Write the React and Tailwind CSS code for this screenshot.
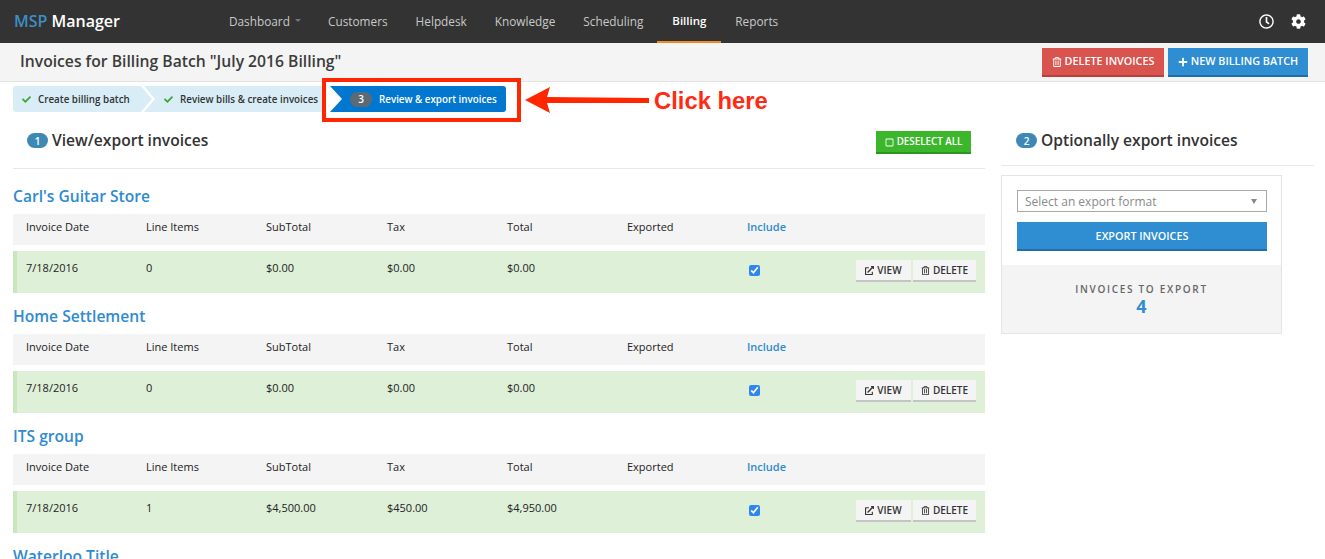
import React from 'react';
import { FaCheck, FaCog, FaExternalLinkAlt, FaPlus, FaRegClock, FaRegSquare, FaRegTrashAlt } from 'react-icons/fa';

const navItems = ['Customers', 'Helpdesk', 'Knowledge', 'Scheduling'];

const customers = [
  { name: "Carl's Guitar Store", items: '0', sub: '$0.00', tax: '$0.00', total: '$0.00' },
  { name: 'Home Settlement', items: '0', sub: '$0.00', tax: '$0.00', total: '$0.00' },
  { name: 'ITS group', items: '1', sub: '$4,500.00', tax: '$450.00', total: '$4,950.00' },
  { name: 'Waterloo Title', items: '0', sub: '$0.00', tax: '$0.00', total: '$0.00' },
];

const Badge = ({ n }) => (
  <span className="inline-flex items-center justify-center w-[21px] h-[15px] mt-[4px] rounded-full bg-[#3d88b5] text-white text-[10px] font-semibold">{n}</span>
);

const Customer = ({ c }) => (
  <section className="mb-[10px]">
    <h3 className="h-[31px] text-[15.6px] leading-[26px] font-semibold text-[#2f8bd0]">{c.name}</h3>
    <div className="grid grid-cols-[120px_120px_121px_120px_120px_120px_1fr] h-[31px] items-center pl-[13px] pb-[4px] bg-[#f4f4f4] text-[#222]">
      <span>Invoice Date</span>
      <span>Line Items</span>
      <span>SubTotal</span>
      <span>Tax</span>
      <span>Total</span>
      <span>Exported</span>
      <span className="font-semibold text-[#2f8bd0]">Include</span>
    </div>
    <div className="grid grid-cols-[120px_120px_121px_120px_120px_120px_1fr] h-[42px] mt-[6px] items-center pl-[9px] pr-[9px] border-l-4 border-[#c9e6bd] bg-[#dff0d8] text-[#222]">
      <span className="pb-[8px]">7/18/2016</span>
      <span className="pb-[8px]">{c.items}</span>
      <span className="pb-[8px]">{c.sub}</span>
      <span className="pb-[8px]">{c.tax}</span>
      <span className="pb-[8px]">{c.total}</span>
      <span />
      <div className="flex items-center justify-between pb-[3px]">
        <input type="checkbox" defaultChecked className="ml-[2px] w-[11px] h-[11px] accent-[#2f86f0]" />
        <div className="flex gap-[2px] text-[10px] font-semibold text-[#333]">
          <button className="flex items-center justify-center gap-[3px] w-[55px] h-[22px] pt-[1px] bg-[#f4f4f4] border-b-2 border-[#c4c4c4]">
            <FaExternalLinkAlt className="text-[9px]" />VIEW
          </button>
          <button className="flex items-center justify-center gap-[3px] w-[63px] h-[22px] pt-[1px] bg-[#f4f4f4] border-b-2 border-[#c4c4c4]">
            <FaRegTrashAlt className="text-[9px]" />DELETE
          </button>
        </div>
      </div>
    </div>
  </section>
);

export default function App() {
  return (
    <div className="relative h-[559px] overflow-hidden bg-white font-['Open_Sans',sans-serif] text-[11px]">
      {/* top nav */}
      <header className="flex items-stretch h-[43px] bg-[#333] text-[11.8px] text-[#c9c9c9]">
        <div className="w-[214px] pl-[14px] text-[16px] leading-[43px] font-semibold text-white">
          <span className="text-[#3d8fc4]">MSP</span> Manager
        </div>
        <a className="flex items-center gap-[5px] w-[100px] pl-[15px]">
          Dashboard
          <span className="border-x-[3px] border-t-[3px] border-x-transparent border-t-[#777] mb-[3px]" />
        </a>
        {navItems.map((item) => (
          <a key={item} className="flex items-center px-[14px]">{item}</a>
        ))}
        <a className="flex items-center w-[64px] justify-center text-[11.5px] font-semibold text-white border-b-2 border-[#f08a24]">Billing</a>
        <a className="flex items-center px-[14px]">Reports</a>
        <div className="flex items-center gap-[17px] ml-auto pr-[19px] text-white text-[15px]">
          <FaRegClock />
          <FaCog />
        </div>
      </header>

      {/* title bar */}
      <div className="flex items-center justify-between h-[39px] pl-[20px] pr-[17px] bg-[#f4f4f4] border-b border-[#e3e3e3]">
        <h1 className="text-[15.7px] font-semibold text-[#3c3c3c]">Invoices for Billing Batch "July 2016 Billing"</h1>
        <div className="flex gap-[4px] text-[10.8px] font-semibold text-white">
          <button className="flex items-center justify-center gap-[3px] w-[122px] h-[29px] mt-[1px] bg-[#d9534f] border-b-2 border-[#b8403d]">
            <FaRegTrashAlt className="text-[10px]" />DELETE INVOICES
          </button>
          <button className="flex items-center justify-center gap-[3px] w-[140px] h-[29px] mt-[1px] bg-[#2f8dd1] border-b-2 border-[#1f6ea8]">
            <FaPlus className="text-[10px]" />NEW BILLING BATCH
          </button>
        </div>
      </div>

      {/* wizard steps */}
      <div className="flex h-[26px] mt-[4px] ml-[13px] text-[9.8px] font-semibold">
        <div className="w-[139px] rounded-l-[3px] overflow-hidden">
          <div className="flex items-center gap-[7px] h-full pl-[9px] bg-[#d9edf7] text-[#333] [clip-path:polygon(0_0,128px_0,139px_50%,128px_100%,0_100%)]">
            <FaCheck className="text-[9px] text-[#3aa63a]" /><span className="pt-[2px]">Create billing batch</span>
          </div>
        </div>
        <div className="flex items-center gap-[7px] w-[178px] -ml-[8px] pl-[20px] bg-[#d9edf7] text-[#333] [clip-path:polygon(0_0,100%_0,100%_100%,0_100%,11px_50%)]">
          <FaCheck className="text-[9px] text-[#3aa63a]" /><span className="pt-[2px]">Review bills &amp; create invoices</span>
        </div>
        <div className="w-[176px] ml-[8px] rounded-r-[3px] overflow-hidden">
          <div className="flex items-center h-full pl-[20px] bg-[#0277cf] text-white [clip-path:polygon(0_0,100%_0,100%_100%,0_100%,12px_50%)]">
            <span className="flex items-center justify-center w-[22px] h-[15px] mr-[7px] rounded-full bg-[#5e6a73] text-[10px]">3</span>
            <span className="pt-[2px]">Review &amp; export invoices</span>
          </div>
        </div>
      </div>

      <div className="flex gap-[16px] pl-[13px] pr-[11px]">
        {/* invoices */}
        <main className="w-[972px] shrink-0">
          <div className="flex items-start justify-between h-[57px] pl-[14px] pr-[14px] pt-[17px] border-b border-[#e8e8e8]">
            <h2 className="flex items-start gap-[4px] text-[15.6px] leading-[22px] font-semibold text-[#333]">
              <Badge n="1" />View/export invoices
            </h2>
            <button className="flex items-center justify-center gap-[3px] w-[95px] h-[23px] mt-[2px] pt-[2px] bg-[#3cb72c] border-b-2 border-[#2c9420] text-[9.8px] font-semibold text-white">
              <FaRegSquare className="text-[9px]" />DESELECT ALL
            </button>
          </div>
          <div className="mt-[14px]">
            {customers.map((c) => <Customer key={c.name} c={c} />)}
          </div>
        </main>

        {/* export */}
        <aside className="flex-1">
          <div className="h-[54px] pl-[15px] pt-[17px] border-b border-[#e8e8e8]">
            <h2 className="flex items-start gap-[4px] text-[15.6px] leading-[22px] font-semibold text-[#333]">
              <Badge n="2" />Optionally export invoices
            </h2>
          </div>
          <div className="w-[281px] mt-[9px] border border-[#e5e5e5]">
            <div className="h-[89px] pl-[15px] pr-[14px] pt-[14px]">
              <div className="flex items-center justify-between h-[22px] pl-[7px] pr-[9px] pt-[1px] border border-[#a9a9a9] text-[12px] text-[#8a8a8a]">
                Select an export format
                <span className="border-x-[3.5px] border-t-[5px] border-x-transparent border-t-[#888]" />
              </div>
              <button className="w-full h-[29px] mt-[10px] pt-[1px] bg-[#2f8dd1] border-b-2 border-[#1f6ea8] text-[10.8px] font-semibold text-white">EXPORT INVOICES</button>
            </div>
            <div className="h-[68px] pt-[17px] bg-[#f4f4f4] text-center">
              <p className="text-[10px] leading-[14px] font-semibold tracking-[1.7px] text-[#666]">INVOICES TO EXPORT</p>
              <p className="text-[18px] leading-[20px] font-bold text-[#2f8dd1]">4</p>
            </div>
          </div>
        </aside>
      </div>

      {/* annotation drawn over the page */}
      <div className="absolute left-[322px] top-[78px] w-[199px] h-[44px] border-4 border-[#ff2600]" />
      <svg className="absolute left-[523px] top-[86px]" width="127" height="28" viewBox="0 0 127 28">
        <path d="M2 14 L27 1 L24 11 L126 12 L126 17 L24 17 L27 27 Z" fill="#ff2600" />
      </svg>
      <div className="absolute left-[654px] top-[86px] font-['Liberation_Sans',sans-serif] text-[23.8px] leading-[30px] font-bold text-[#ff2a12]">Click here</div>
    </div>
  );
}
